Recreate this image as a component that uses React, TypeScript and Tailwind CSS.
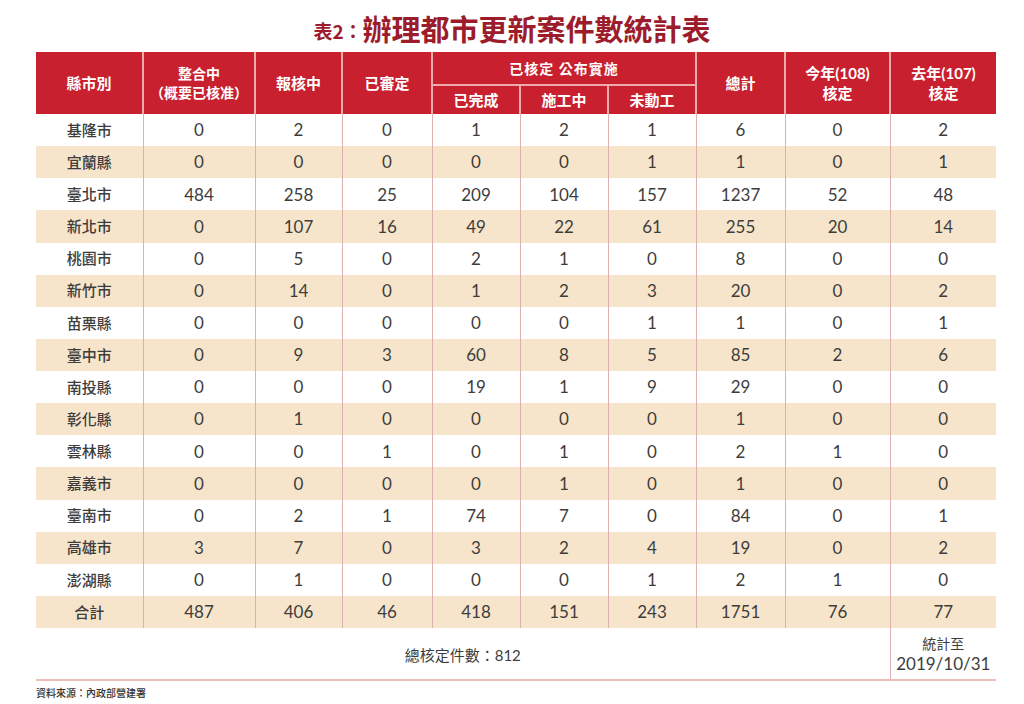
import React from "react";

const rows: (string | number)[][] = [
  ["基隆市", 0, 2, 0, 1, 2, 1, 6, 0, 2],
  ["宜蘭縣", 0, 0, 0, 0, 0, 1, 1, 0, 1],
  ["臺北市", 484, 258, 25, 209, 104, 157, 1237, 52, 48],
  ["新北市", 0, 107, 16, 49, 22, 61, 255, 20, 14],
  ["桃園市", 0, 5, 0, 2, 1, 0, 8, 0, 0],
  ["新竹市", 0, 14, 0, 1, 2, 3, 20, 0, 2],
  ["苗栗縣", 0, 0, 0, 0, 0, 1, 1, 0, 1],
  ["臺中市", 0, 9, 3, 60, 8, 5, 85, 2, 6],
  ["南投縣", 0, 0, 0, 19, 1, 9, 29, 0, 0],
  ["彰化縣", 0, 1, 0, 0, 0, 0, 1, 0, 0],
  ["雲林縣", 0, 0, 1, 0, 1, 0, 2, 1, 0],
  ["嘉義市", 0, 0, 0, 0, 1, 0, 1, 0, 0],
  ["臺南市", 0, 2, 1, 74, 7, 0, 84, 0, 1],
  ["高雄市", 3, 7, 0, 3, 2, 4, 19, 0, 2],
  ["澎湖縣", 0, 1, 0, 0, 0, 1, 2, 1, 0],
  ["合計", 487, 406, 46, 418, 151, 243, 1751, 76, 77],
];

const widths = [107, 112, 87, 90, 88, 88, 88, 89, 105, 106];

const cjk = "font-['Lato','Noto_Sans_CJK_TC',sans-serif]";

export default function App() {
  return (
    <div className={`w-[1024px] h-[704px] bg-white overflow-hidden ${cjk}`}>
      <div className="h-[52px] pt-[9px] flex justify-center">
        <div className="flex items-end h-[38px] leading-[38px] text-[#9c1c2c] font-['Noto_Sans_CJK_TC',serif] font-bold">
          <span className="text-[19px] leading-[32px]">表2：</span>
          <span className="text-[29px] tracking-[0px]">辦理都市更新案件數統計表</span>
        </div>
      </div>
      <div className="px-[36px]">
        <table className="table-fixed border-collapse w-[960px]">
          <colgroup>
            {widths.map((w, i) => (
              <col key={i} style={{ width: w }} />
            ))}
          </colgroup>
          <thead>
            <tr className="h-[33px]">
              <th rowSpan={2} className="bg-[#c8202e] text-white text-[15px] font-bold border-r-2 border-[#f1aaaa] leading-[18px]">縣市別</th>
              <th rowSpan={2} className="bg-[#c8202e] text-white text-[14px] font-bold border-r-2 border-[#f1aaaa] leading-[19px]">
                整合中
                <br />
                （概要已核准）
              </th>
              <th rowSpan={2} className="bg-[#c8202e] text-white text-[15px] font-bold border-r-2 border-[#f1aaaa]">報核中</th>
              <th rowSpan={2} className="bg-[#c8202e] text-white text-[15px] font-bold border-r-2 border-[#f1aaaa]">已審定</th>
              <th colSpan={3} className="bg-[#c8202e] text-white text-[14px] font-bold border-r-2 border-b-2 border-[#f1aaaa] tracking-[1px]">已核定 公布實施</th>
              <th rowSpan={2} className="bg-[#c8202e] text-white text-[15px] font-bold border-r-2 border-[#f1aaaa]">總計</th>
              <th rowSpan={2} className="bg-[#c8202e] text-white text-[15px] font-bold border-r-2 border-[#f1aaaa] leading-[20px]">
                今年(108)
                <br />
                核定
              </th>
              <th rowSpan={2} className="bg-[#c8202e] text-white text-[15px] font-bold leading-[20px]">
                去年(107)
                <br />
                核定
              </th>
            </tr>
            <tr className="h-[29px]">
              <th className="bg-[#c8202e] text-white text-[15px] font-bold border-r-2 border-[#f1aaaa]">已完成</th>
              <th className="bg-[#c8202e] text-white text-[15px] font-bold border-r-2 border-[#f1aaaa]">施工中</th>
              <th className="bg-[#c8202e] text-white text-[15px] font-bold border-r-2 border-[#f1aaaa]">未動工</th>
            </tr>
          </thead>
          <tbody>
            {rows.map((r, ri) => (
              <tr key={ri} className={`h-[32.125px] ${ri % 2 === 1 ? "bg-[#f7e5cb]" : "bg-white"}`}>
                {r.map((v, ci) => (
                  <td
                    key={ci}
                    className={`text-center p-0 text-[#3d3d3d] ${ci < 9 ? "border-r border-[#dcb0b0]" : ""} ${
                      ci === 0 ? "text-[15px] font-medium" : "text-[17px]"
                    }`}
                  >
                    {v}
                  </td>
                ))}
              </tr>
            ))}
            <tr className="h-[52px] border-b-2 border-[#ebbcbc]">
              <td colSpan={9} className="text-center text-[15px] text-[#3d3d3d] pt-[3px]">
                總核定件數：812
              </td>
              <td className="text-center text-[#3d3d3d] border-l border-[#dcb0b0] leading-[20px]">
                <div className="text-[14px]">統計至</div>
                <div className="text-[17px]">2019/10/31</div>
              </td>
            </tr>
          </tbody>
        </table>
        <div className="mt-[5px] text-[10px] text-[#333] font-medium">資料來源：內政部營建署</div>
      </div>
    </div>
  );
}
